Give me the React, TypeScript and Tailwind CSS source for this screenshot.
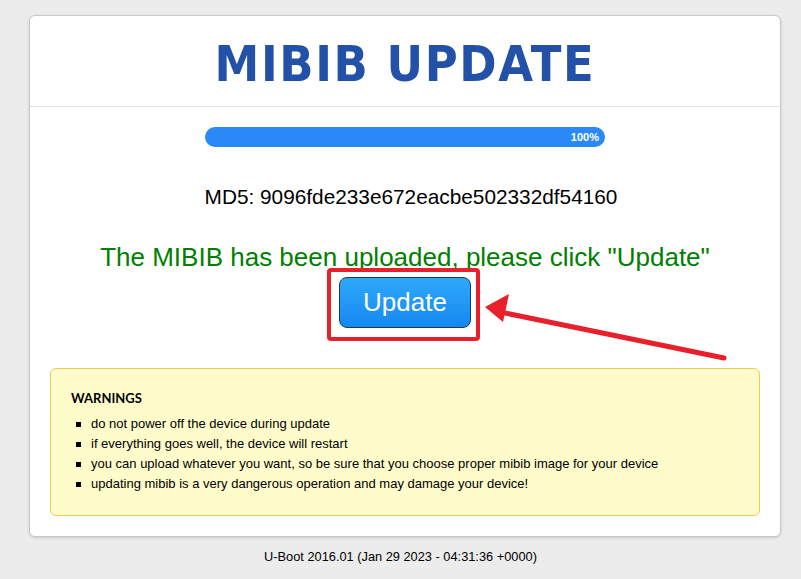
import React from "react";

const warnings = [
  "do not power off the device during update",
  "if everything goes well, the device will restart",
  "you can upload whatever you want, so be sure that you choose proper mibib image for your device",
  "updating mibib is a very dangerous operation and may damage your device!",
];

export default function App() {
  return (
    <div className="min-h-[579px] bg-[#ececec] pt-[15px] font-['Liberation_Sans',Arial,sans-serif] text-black">
      <div className="relative ml-[29px] w-[752px] rounded-[6px] border border-[#c8c8c8] bg-white shadow-[0_1px_3px_rgba(0,0,0,0.15)]">
        {/* header */}
        <div className="flex h-[91px] items-center justify-center border-b border-[#e2e2e2]">
          <h1 className="pt-[6px] font-['DejaVu_Sans_Condensed','DejaVu_Sans',sans-serif] text-[50px] font-bold leading-none tracking-[1.6px] text-[#2451a8]">
            MIBIB UPDATE
          </h1>
        </div>

        <div className="flex flex-col items-center px-[20px] pb-[20px] pt-[20px]">
          {/* progress */}
          <div className="flex h-[20px] w-[400px] items-center justify-end rounded-full bg-[#2b88f7] pr-[6px]">
            <span className="text-[11px] font-bold text-white">100%</span>
          </div>

          <p className="ml-[12px] mt-[38px] text-[20.8px] leading-[24px]">MD5: 9096fde233e672eacbe502332df54160</p>

          <p className="mt-[33px] text-[26px] leading-[30px] text-[#008000]">
            The MIBIB has been uploaded, please click "Update"
          </p>

          <button className="mt-[5px] h-[51px] w-[132px] rounded-[8px] border border-[#1d3a5c] bg-gradient-to-b from-[#2fa8fa] to-[#1588f1] text-[26px] text-white">
            Update
          </button>

          {/* warnings */}
          <div className="mt-[40px] w-full rounded-[6px] border border-[#f5c94a] bg-[#fffccc] px-[20px] pb-[21px] pt-[20px]">
            <h2 className="font-['Lato',sans-serif] text-[13px] font-bold leading-[18px]">WARNINGS</h2>
            <ul className="mt-[7px] flex flex-col">
              {warnings.map((w) => (
                <li key={w} className="flex items-center gap-[10px] pl-[5px] text-[13px] leading-[20px]">
                  <span className="h-[5px] w-[5px] bg-black" />
                  {w}
                </li>
              ))}
            </ul>
          </div>
        </div>

        {/* annotation overlay */}
        <svg className="pointer-events-none absolute left-0 top-0" width="751" height="360" viewBox="0 0 751 360">
          <rect x="299" y="254" width="149" height="69" rx="2" fill="none" stroke="#e8202b" strokeWidth="4" />
          <line x1="694" y1="342" x2="470" y2="296" stroke="#e8202b" strokeWidth="5" strokeLinecap="round" />
          <polygon points="455,291 479,278 473,306" fill="#e8202b" />
        </svg>
      </div>

      <p className="py-[12px] text-center text-[12.8px] leading-[15px]">
        U-Boot 2016.01 (Jan 29 2023 - 04:31:36 +0000)
      </p>
    </div>
  );
}
